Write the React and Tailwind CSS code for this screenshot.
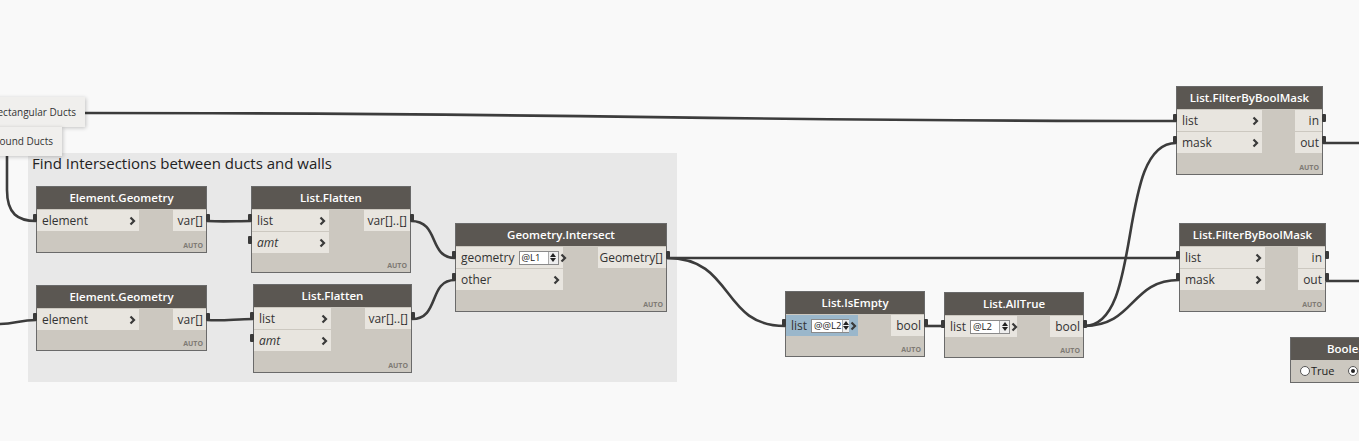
import React from "react";

const F = { fontFamily: '"Open Sans", "Liberation Sans", sans-serif' };

function Chevron() {
  return (
    <svg width="7" height="10" viewBox="0 0 7 10" className="shrink-0">
      <path d="M1.5 1.5 L5 5 L1.5 8.5" fill="none" stroke="#3a3a3a" strokeWidth="2.2" />
    </svg>
  );
}

function Spinner({ text, w }) {
  return (
    <div className="flex items-stretch h-[14px] border border-[#8a8a8a] bg-white" style={{ width: w }}>
      <div className="flex-1 text-[9.5px] leading-[12px] pl-[2px] text-[#222] whitespace-nowrap">{text}</div>
      <div className="w-[10px] border-l border-[#aaa] bg-[#eee] flex flex-col items-center justify-center gap-[1px]">
        <svg width="6" height="4" viewBox="0 0 6 4"><path d="M0 4 L3 0 L6 4 Z" fill="#222" /></svg>
        <svg width="6" height="4" viewBox="0 0 6 4"><path d="M0 0 L3 4 L6 0 Z" fill="#222" /></svg>
      </div>
    </div>
  );
}

function Nub({ side, top }) {
  return (
    <div
      className={`absolute w-[4px] h-[8px] bg-[#3a3a3a] rounded-[1px] ${side === "l" ? "left-[-4px]" : "right-[-4px]"}`}
      style={{ top }}
    />
  );
}

function Node({ x, y, w, h, title, inputs, inputW, outputs, outW, highlight }) {
  return (
    <div
      className="absolute border border-[#6a6a6a] bg-[#ccc8c0]"
      style={{ left: x, top: y, width: w, height: h, ...F }}
    >
      <div className="h-[22px] bg-[#5b5752] flex items-center justify-center text-white text-[11.5px] font-semibold whitespace-nowrap">
        {title}
      </div>
      <div className="flex justify-between pt-px">
        <div className="flex flex-col gap-px" style={{ width: inputW }}>
          {inputs.map((p, i) => (
            <div
              key={i}
              className={`h-[21px] flex items-center pl-[5px] pr-[3px] text-[12px] text-[#333] whitespace-nowrap ${highlight ? "bg-[#9ab7cb]" : "bg-[#e8e5df]"}`}
            >
              <span className={p.italic ? "italic" : ""}>{p.label}</span>
              {p.spinner ? (
                <div className="ml-[4px] mr-[1px]">
                  <Spinner text={p.spinner} w={p.sw} />
                </div>
              ) : (
                <div className="flex-1" />
              )}
              <Chevron />
            </div>
          ))}
        </div>
        <div className="flex flex-col gap-px items-end">
          {outputs.map((o, i) => (
            <div key={i} className="h-[21px] flex items-center justify-end pr-[3px] bg-[#e8e5df] text-[12px] text-[#333] whitespace-nowrap" style={{ width: outW }}>
              {o}
            </div>
          ))}
        </div>
      </div>
      <div className="absolute right-[3px] bottom-[3px] text-[7px] font-bold text-[#7e7a74] leading-none">AUTO</div>
      {inputs.map((_, i) => (
        <Nub key={"l" + i} side="l" top={27 + i * 22} />
      ))}
      {outputs.map((_, i) => (
        <Nub key={"r" + i} side="r" top={27 + i * 22} />
      ))}
    </div>
  );
}

export default function App() {
  const wire = { fill: "none", stroke: "#3c3c3c", strokeWidth: 2.6 };
  return (
    <div className="relative w-[1359px] h-[441px] overflow-hidden bg-[#f9f9f9]" style={F}>
      {/* group */}
      <div className="absolute left-[28px] top-[153px] w-[649px] h-[229px] bg-[#e8e8e8]">
        <div className="pl-[4px] text-[15px] text-[#222] leading-[20px] whitespace-nowrap">
          Find Intersections between ducts and walls
        </div>
      </div>

      {/* wires */}
      <svg className="absolute left-0 top-0" width="1359" height="441">
        <path d="M85 113 C 600 113, 700 121, 1176 121" {...wire} />
        <path d="M7 140 L7 190 C 7 214, 18 221, 36 221" {...wire} />
        <path d="M0 324 C 15 324, 20 320, 36 320" {...wire} />
        <path d="M207 221 C 225 222, 235 221, 251 221" {...wire} />
        <path d="M207 320 C 225 321, 235 319, 253 319" {...wire} />
        <path d="M411 221 C 440 221, 428 258, 455 258" {...wire} />
        <path d="M412 319 C 440 319, 428 280, 455 280" {...wire} />
        <path d="M667 258 C 900 258, 1000 258, 1179 258" {...wire} />
        <path d="M667 258 C 735 258, 720 326, 785 326" {...wire} />
        <path d="M925 326 L944 326" {...wire} />
        <path d="M1084 326 C 1145 326, 1115 143, 1176 143" {...wire} />
        <path d="M1084 326 C 1135 326, 1130 280, 1179 280" {...wire} />
        <path d="M1323 143 L1359 143" {...wire} />
        <path d="M1326 281 L1359 281" {...wire} />
      </svg>

      {/* selection nodes */}
      <div className="absolute left-[-12px] top-[97px] w-[97px] h-[30px] bg-[#f0efed] shadow-[1px_1px_4px_rgba(0,0,0,0.22)] flex items-center justify-end pr-[9px] text-[10px] text-[#333] whitespace-nowrap">
        Rectangular Ducts
      </div>
      <div className="absolute left-[-12px] top-[127px] w-[74px] h-[29px] bg-[#f0efed] shadow-[1px_1px_4px_rgba(0,0,0,0.22)] flex items-center justify-end pr-[9px] text-[10px] text-[#333] whitespace-nowrap">
        Round Ducts
      </div>

      <Node x={36} y={186} w={171} h={67} title="Element.Geometry" inputs={[{ label: "element" }]} inputW={102} outputs={["var[]"]} outW={33} />
      <Node x={251} y={186} w={160} h={87} title="List.Flatten" inputs={[{ label: "list" }, { label: "amt", italic: true }]} inputW={77} outputs={["var[]..[]"]} outW={46} />
      <Node x={455} y={223} w={212} h={89} title="Geometry.Intersect" inputs={[{ label: "geometry", spinner: "@L1", sw: 40 }, { label: "other" }]} inputW={107} outputs={["Geometry[]"]} outW={68} />
      <Node x={36} y={285} w={171} h={66} title="Element.Geometry" inputs={[{ label: "element" }]} inputW={102} outputs={["var[]"]} outW={33} />
      <Node x={253} y={284} w={159} h={89} title="List.Flatten" inputs={[{ label: "list" }, { label: "amt", italic: true }]} inputW={77} outputs={["var[]..[]"]} outW={46} />
      <Node x={785} y={291} w={140} h={66} title="List.IsEmpty" highlight inputs={[{ label: "list", spinner: "@@L2", sw: 38 }]} inputW={72} outputs={["bool"]} outW={33} />
      <Node x={944} y={292} w={140} h={66} title="List.AllTrue" inputs={[{ label: "list", spinner: "@L2", sw: 40 }]} inputW={72} outputs={["bool"]} outW={33} />
      <Node x={1176} y={86} w={147} h={89} title="List.FilterByBoolMask" inputs={[{ label: "list" }, { label: "mask" }]} inputW={85} outputs={["in", "out"]} outW={27} />
      <Node x={1179} y={223} w={147} h={89} title="List.FilterByBoolMask" inputs={[{ label: "list" }, { label: "mask" }]} inputW={85} outputs={["in", "out"]} outW={27} />

      {/* Boolean node */}
      <div className="absolute left-[1290px] top-[337px] w-[110px] h-[46px] border border-[#6a6a6a] bg-[#ccc8c0]">
        <div className="h-[22px] bg-[#5b5752] flex items-center pl-[36px] text-white text-[11.5px] font-semibold whitespace-nowrap">Boolean</div>
        <div className="flex items-center h-[22px] pl-[9px] text-[11px] text-[#222] whitespace-nowrap">
          <div className="w-[10px] h-[10px] rounded-full border border-[#555] bg-white" />
          <span className="ml-[1px]">True</span>
          <div className="ml-[14px] w-[10px] h-[10px] rounded-full border border-[#555] bg-white flex items-center justify-center">
            <div className="w-[4px] h-[4px] rounded-full bg-[#222]" />
          </div>
          <span className="ml-[1px] text-[#c8860a]">False</span>
        </div>
      </div>
    </div>
  );
}
